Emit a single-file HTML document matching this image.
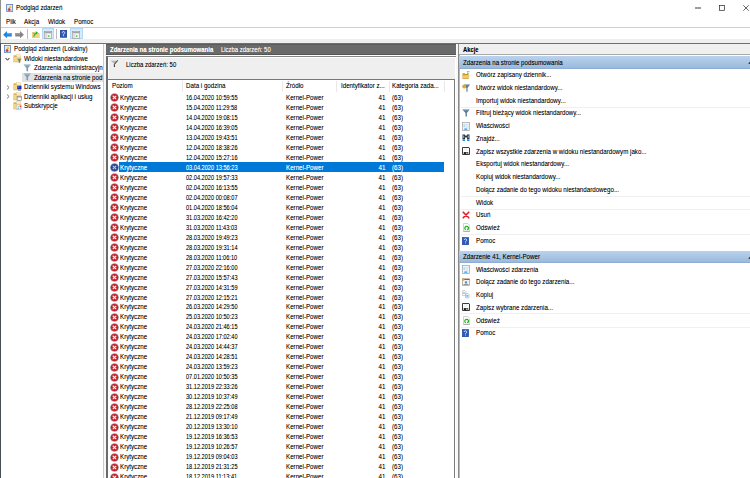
<!DOCTYPE html>
<html><head><meta charset="utf-8">
<style>
*{box-sizing:border-box;margin:0;padding:0}
html,body{width:750px;height:478px;overflow:hidden;background:#fff;font-family:"Liberation Sans",sans-serif;font-size:6.7px;color:#000;text-shadow:0 0 0.3px rgba(0,0,0,.3)}
.a{position:absolute;white-space:nowrap;transform-origin:0 50%;transform:scaleX(var(--k,.925))}
.a.i{transform:none}
#lb{position:absolute;left:0;top:0;width:1px;height:478px;background:linear-gradient(#8e938e 0,#8e938e 43px,#474e57 43px)}
/* title */
#title{left:15.7px;top:4px;line-height:8px}
.menu{top:17px;line-height:9px}
#mline{position:absolute;left:1px;top:26.6px;width:749px;height:1px;background:#cfcfcf}
#tbband{position:absolute;left:1px;top:39.2px;width:749px;height:3.6px;background:#efefef}
#tbline{position:absolute;left:1px;top:42.6px;width:749px;height:1px;background:#707070}
/* left tree */
#ldiv{position:absolute;left:103px;top:43.5px;width:3px;height:435px;background:#f8f8f8;border-left:1px solid #c6cad2}
.tr{line-height:9px}
.tsep{position:absolute;top:29.4px;width:1px;height:9.6px;background:#bdbdbd}
.tbtn{position:absolute;top:28.2px;width:12.4px;height:11.2px;background:#d8eafa;border:1px solid #b4d8f6}
#tree{position:absolute;left:0;top:43.5px;width:103px;height:80px;overflow:hidden}
.dt{--k:.84}
.rt{line-height:8px}
.wh{color:#fff;text-shadow:0 0 0.3px rgba(255,255,255,.5)}
#tsel{position:absolute;left:22px;top:72.5px;width:81px;height:9px;background:#e2e2e2}
/* center */
#chead{position:absolute;left:106px;top:43.5px;width:349.6px;height:11.1px;background:#6a6a6a;border-top:1px solid #5c5c5c;border-bottom:1px solid #555}
#chline{position:absolute;left:106px;top:54.6px;width:349.6px;height:1px;background:#fff}
#cbox{position:absolute;left:106px;top:55.8px;width:349.6px;height:23.5px;background:#efefef;border-left:2px solid #6b6b6b;border-top:1.5px solid #858585;box-shadow:inset 1px 1px 0 #fff,inset -1px 0 0 #fff}
#cleft{position:absolute;left:106px;top:56px;width:2px;height:422px;background:#6b6b6b}
#list{position:absolute;left:106px;top:78.9px;width:349px;height:400px;background:#fff;border-top:1px solid #777;border-right:1px solid #7a7a7a;border-left:2px solid #6b6b6b}
.hd{top:82px;line-height:8px;font-size:6.7px;color:#000;text-shadow:0 0 0.3px rgba(0,0,0,.3)}
.cs{position:absolute;top:81.2px;width:1px;height:10.8px;background:#e8e8e8}
.row{position:absolute;left:118.9px;width:324.8px;height:9.985px}
.row.sel{background:#0078d7}
/* right */
#rdiv{position:absolute;left:455.6px;top:43.5px;width:2.6px;height:435px;background:#f8f8f8}
#rpane{position:absolute;left:458px;top:43px;width:292px;height:435px;background:#fff;border-left:1px solid #8a8a8a;border-top:1px solid #6e6e6e;box-shadow:inset 1px 0 0 #b8b8b8}
#rhead{position:absolute;left:459px;top:44px;width:291px;height:10.8px;background:#f0f0f0;border-bottom:1px solid #aaaaaa}
.band{position:absolute;left:459px;width:291px;background:linear-gradient(#b9d3ee,#9cb9dc);border-bottom:1px solid #8eadd4}
.it{line-height:8px}
.sepr{position:absolute;left:461px;width:289px;height:1px;background:#f0f0f0}
</style></head><body>
<div id="lb"></div>
<!-- title bar -->
<div class="a" id="title">Podgląd zdarzeń</div>
<div class="a menu" style="left:6px">Plik</div>
<div class="a menu" style="left:24.3px">Akcja</div>
<div class="a menu" style="left:47.7px">Widok</div>
<div class="a menu" style="left:74px">Pomoc</div>
<div id="mline"></div>
<div id="tbband"></div>
<div id="tbline"></div>

<div id="ldiv"></div>
<div id="tree" style="top:0;height:120px">
<div id="tsel"></div>
<div class="a i" style="left:3.8px;top:45.1px;height:8px"><svg width="7" height="8" viewBox="0 0 14 16"><rect x="1" y="1" width="12" height="14" fill="#e8ecf0" stroke="#4a76b8" stroke-width="1.5"/><path d="M2.5 14.3H12.2V11H2.5z" fill="#c8d0dc"/><path d="M8 2.2L11 7.8H5z" fill="#f2c21c"/><circle cx="6" cy="11" r="2.7" fill="#d42028"/><circle cx="5.4" cy="10.3" r="0.9" fill="#f4a0a0"/></svg></div>
<div class="a i" style="left:4.6px;top:56px;height:5px"><svg width="5" height="5" viewBox="0 0 5 5"><path d="M0.6 1L2.5 3.2L4.4 1" fill="none" stroke="#222" stroke-width="1"/></svg></div>
<div class="a i" style="left:12.8px;top:53.8px;height:9px;line-height:0"><svg width="9" height="9" viewBox="0 0 18 18"><path d="M1 2.5H6.5L8 4H15.5V16H1z" fill="#dcb24e"/><rect x="7.5" y="1" width="8" height="5" fill="#fbf0c8" stroke="#d8c088" stroke-width="0.6"/><path d="M1 6H15.5V16H1z" fill="#f3d585"/><path d="M1 16H15.5" stroke="#c9a040" stroke-width="0.8"/><path d="M8 9.5H17.5L14 13.5V18L11.5 16.8V13.5z" fill="#58809e"/><path d="M9 10.2H16.5" stroke="#a8c0d0" stroke-width="0.8"/></svg></div>
<div class="a i" style="left:22.7px;top:63.8px;height:8px"><svg width="8.5" height="8" viewBox="0 0 14 14"><path d="M0.5 1h13l-5 6v6.5l-3-1.5V7z" fill="#7f9fb8"/><path d="M1.5 2h11" stroke="#bcd0de" stroke-width="1.2"/></svg></div>
<div class="a i" style="left:22.7px;top:73.2px;height:8px"><svg width="8.5" height="8" viewBox="0 0 14 14"><path d="M0.5 1h13l-5 6v6.5l-3-1.5V7z" fill="#7f9fb8"/><path d="M1.5 2h11" stroke="#bcd0de" stroke-width="1.2"/></svg></div>
<div class="a i" style="left:5.5px;top:84.6px;height:5px;line-height:0"><svg width="5" height="5" viewBox="0 0 5 5"><path d="M1 0.5L3.1 2.5L1 4.5" fill="none" stroke="#7a7a7a" stroke-width="1"/></svg></div>
<div class="a i" style="left:5.5px;top:93.8px;height:5px;line-height:0"><svg width="5" height="5" viewBox="0 0 5 5"><path d="M1 0.5L3.1 2.5L1 4.5" fill="none" stroke="#7a7a7a" stroke-width="1"/></svg></div>
<div class="a i" style="left:12.7px;top:82.2px;height:9px;line-height:0"><svg width="9" height="9" viewBox="0 0 18 18"><path d="M1 2.5H6.5L8 4H15.5V16H1z" fill="#dcb24e"/><rect x="7.5" y="1" width="8" height="5" fill="#fbf0c8" stroke="#d8c088" stroke-width="0.6"/><path d="M1 6H15.5V16H1z" fill="#f3d585"/><path d="M1 16H15.5" stroke="#c9a040" stroke-width="0.8"/><rect x="8.5" y="7.5" width="8.5" height="7" fill="#1a2cb4"/><rect x="9.5" y="8.5" width="3" height="3.5" fill="#fff" opacity=".25"/><rect x="10" y="14.5" width="6" height="3" fill="#8e96a8"/></svg></div>
<div class="a i" style="left:12.7px;top:91.7px;height:9px;line-height:0"><svg width="9" height="9" viewBox="0 0 18 18"><path d="M1 2.5H6.5L8 4H15.5V16H1z" fill="#dcb24e"/><rect x="7.5" y="1" width="8" height="5" fill="#fbf0c8" stroke="#d8c088" stroke-width="0.6"/><path d="M1 6H15.5V16H1z" fill="#f3d585"/><path d="M1 16H15.5" stroke="#c9a040" stroke-width="0.8"/><rect x="8.2" y="9" width="9.2" height="8.2" fill="#f8f8f8" stroke="#66687a" stroke-width="1.1"/><rect x="8.2" y="9" width="9.2" height="2" fill="#9a9cae"/></svg></div>
<div class="a i" style="left:12.7px;top:101.2px;height:9px;line-height:0"><svg width="9" height="9" viewBox="0 0 18 18"><path d="M1 2.5H6.5L8 4H15.5V16H1z" fill="#dcb24e"/><rect x="7.5" y="1" width="8" height="5" fill="#fbf0c8" stroke="#d8c088" stroke-width="0.6"/><path d="M1 6H15.5V16H1z" fill="#f3d585"/><path d="M1 16H15.5" stroke="#c9a040" stroke-width="0.8"/><rect x="7" y="8" width="10.5" height="9.5" fill="#fafafa" stroke="#a8aab8" stroke-width="0.8"/><path d="M8.5 16.5L11 12.5V16.5z" fill="#2a7ed6"/><rect x="9.5" y="11" width="2" height="1.5" fill="#2a7ed6"/><rect x="13.5" y="9" width="2.6" height="3.6" fill="#e83434"/><rect x="13.5" y="13.5" width="2.6" height="2.6" fill="#aac8e8"/></svg></div>
<div class="a tr" style="left:13.8px;top:44px">Podgląd zdarzeń (Lokalny)</div>
<div class="a tr" style="left:24.2px;top:53.5px">Widoki niestandardowe</div>
<div class="a tr" style="left:33.9px;top:63px">Zdarzenia administracyjn</div>
<div class="a tr" style="left:33.9px;top:72.5px">Zdarzenia na stronie pod</div>
<div class="a tr" style="left:24.2px;top:82px">Dzienniki systemu Windows</div>
<div class="a tr" style="left:24.2px;top:91.5px">Dzienniki aplikacji i usług</div>
<div class="a tr" style="left:24.2px;top:101px">Subskrypcje</div>
</div>
<!-- toolbar -->
<div class="a i" style="left:2.9px;top:30.8px;height:8px;line-height:0"><svg width="9" height="7.4" viewBox="0 0 15 12"><path d="M0.2 6L6.6 0V3.1H14.6V8.9H6.6V12z" fill="#1a84e0"/><path d="M6.6 3.1H14.6V5.5H6.6z" fill="#4fb0f6"/></svg></div>
<div class="a i" style="left:14.9px;top:30.8px;height:8px;line-height:0"><svg width="9" height="7.4" viewBox="0 0 15 12"><path d="M14.8 6L8.4 0V3.1H0.4V8.9H8.4V12z" fill="#858585"/><path d="M0.4 3.1H8.4V5.5H0.4z" fill="#a0a0a0"/></svg></div>
<div class="tsep" style="left:27.2px"></div>
<div class="a i" style="left:32px;top:30.8px;height:8px;line-height:0"><svg width="7.6" height="7.6" viewBox="0 0 14 14"><path d="M0.5 2.5h5l1.2 1.5H13.5V13.5H0.5z" fill="#d8ac44"/><path d="M0.5 5.5H13.5V13.5H0.5z" fill="#f2d47e"/><path d="M0.5 13.5H13.5" stroke="#c09030" stroke-width="0.8"/><path d="M3.2 10.5C3.8 7.5 5.5 4.8 8.2 3.5" fill="none" stroke="#1fae2a" stroke-width="2.1"/><path d="M6.5 0.6L11 2.6L7.6 6.4z" fill="#1fae2a"/></svg></div>
<div class="tbtn" style="left:42px"></div>
<div class="a i" style="left:44px;top:30.8px;height:8px"><svg width="8" height="8" viewBox="0 0 14 14"><rect x="0.5" y="1" width="13" height="12" fill="#f6f6f6" stroke="#8c8c8c" stroke-width="1"/><rect x="1" y="1.5" width="12" height="2.5" fill="#a4a4a4"/><rect x="2" y="5" width="4" height="7" fill="#dcdcdc"/><rect x="7.5" y="7.5" width="1.8" height="3" fill="#1fb51f"/></svg></div>
<div class="tsep" style="left:55.6px"></div>
<div class="a i" style="left:60px;top:30.2px;height:8px"><svg width="7" height="7.6" viewBox="0 0 13 14"><rect x="0.6" y="0.6" width="11.8" height="12.8" fill="#2c5ec2" stroke="#102f86" stroke-width="1.2"/><path d="M4.3 5a2.2 2.2 0 1 1 3.2 2c-0.7 0.4-1 0.7-1 1.6" fill="none" stroke="#fff" stroke-width="1.5"/><rect x="5.7" y="9.7" width="1.6" height="1.6" fill="#fff"/></svg></div>
<div class="tbtn" style="left:70.2px"></div>
<div class="a i" style="left:72.3px;top:30.8px;height:8px"><svg width="8" height="8" viewBox="0 0 14 14"><rect x="0.5" y="1" width="13" height="12" fill="#f6f6f6" stroke="#8c8c8c" stroke-width="1"/><rect x="1" y="1.5" width="12" height="2.5" fill="#a4a4a4"/><rect x="2" y="5" width="4" height="7" fill="#dcdcdc"/><rect x="7.5" y="7.5" width="1.8" height="3" fill="#1fb51f"/></svg></div>
<!-- title icon & controls -->
<div class="a i" style="left:5.7px;top:3.7px;height:8px"><svg width="7.3" height="8" viewBox="0 0 14 16"><rect x="1" y="1" width="12" height="14" fill="#e8ecf0" stroke="#4a76b8" stroke-width="1.5"/><path d="M2.5 14.3H12.2V11H2.5z" fill="#c8d0dc"/><path d="M8 2.2L11 7.8H5z" fill="#f2c21c"/><circle cx="6" cy="11" r="2.7" fill="#d42028"/><circle cx="5.4" cy="10.3" r="0.9" fill="#f4a0a0"/></svg></div>
<div class="a i" style="left:694.8px;top:4.5px;height:6px;line-height:0"><svg width="6" height="6" viewBox="0 0 6 6"><rect x="0" y="2.5" width="6" height="1" fill="#3a3a3a"/></svg></div>
<div class="a i" style="left:718.8px;top:4.5px;height:6px;line-height:0"><svg width="6" height="6" viewBox="0 0 6 6"><rect x="0.5" y="0.5" width="5" height="4.8" fill="none" stroke="#222" stroke-width="0.7"/></svg></div>
<div class="a i" style="left:742.5px;top:4.5px;height:6px;line-height:0"><svg width="6" height="6" viewBox="0 0 6 6"><path d="M0.3 0.3L5.7 5.7M5.7 0.3L0.3 5.7" stroke="#222" stroke-width="0.7"/></svg></div>
<div id="chead"></div>
<div class="a wh" style="left:109.6px;top:45.5px;line-height:8px;font-weight:bold;--k:.893">Zdarzenia na stronie podsumowania</div>
<div class="a wh" style="left:221.2px;top:45.5px;line-height:8px;--k:.885">Liczba zdarzeń: 50</div>
<div id="chline"></div>
<div id="cbox"></div>
<div id="cleft"></div>
<div class="a" style="left:125.9px;top:60.8px;line-height:8px;--k:.895">Liczba zdarzeń: 50</div>
<div class="a i" style="left:110px;top:60px;height:7px"><svg width="8.3" height="7" viewBox="0 0 14 13"><path d="M0.5 1.5h13L8 7.5z" fill="#b4b4b4"/><path d="M13.5 1L7.5 8v4.5" fill="none" stroke="#222" stroke-width="1.8" stroke-linecap="round"/></svg></div>
<div id="list"></div>
<div class="a hd" style="left:112px">Poziom</div>
<div class="a hd" style="left:185.8px">Data i godzina</div>
<div class="a hd" style="left:285.8px">Źródło</div>
<div class="a hd" style="left:341px">Identyfikator z...</div>
<div class="a hd" style="left:392px">Kategoria zada...</div>
<div class="cs" style="left:182.3px"></div>
<div class="cs" style="left:282.3px"></div>
<div class="cs" style="left:336.4px"></div>
<div class="cs" style="left:388.6px"></div>
<div class="cs" style="left:443.5px"></div>
<div class="a i" style="left:110.1px;top:93.30px;height:9px;line-height:0"><svg width="9" height="9" viewBox="0 0 18 18"><circle cx="9" cy="9" r="8.6" fill="#8c9aa2"/><circle cx="9" cy="9" r="7.2" fill="#d11a22"/><circle cx="6.5" cy="6" r="2.5" fill="#e8474d" opacity=".6"/><path d="M5.6 5.6L12.4 12.4M12.4 5.6L5.6 12.4" stroke="#fff" stroke-width="2.1"/></svg></div>
<div class="a rt" style="left:119.6px;top:93.80px">Krytyczne</div>
<div class="a rt dt" style="left:185.8px;top:93.80px">16.04.2020 10:59:55</div>
<div class="a rt" style="left:285.8px;top:93.80px">Kernel-Power</div>
<div class="a rt" style="left:370px;width:15.5px;text-align:right;transform-origin:100% 50%;top:93.80px">41</div>
<div class="a rt" style="left:392px;top:93.80px">(63)</div>
<div class="a i" style="left:110.1px;top:103.28px;height:9px;line-height:0"><svg width="9" height="9" viewBox="0 0 18 18"><circle cx="9" cy="9" r="8.6" fill="#8c9aa2"/><circle cx="9" cy="9" r="7.2" fill="#d11a22"/><circle cx="6.5" cy="6" r="2.5" fill="#e8474d" opacity=".6"/><path d="M5.6 5.6L12.4 12.4M12.4 5.6L5.6 12.4" stroke="#fff" stroke-width="2.1"/></svg></div>
<div class="a rt" style="left:119.6px;top:103.78px">Krytyczne</div>
<div class="a rt dt" style="left:185.8px;top:103.78px">15.04.2020 11:29:58</div>
<div class="a rt" style="left:285.8px;top:103.78px">Kernel-Power</div>
<div class="a rt" style="left:370px;width:15.5px;text-align:right;transform-origin:100% 50%;top:103.78px">41</div>
<div class="a rt" style="left:392px;top:103.78px">(63)</div>
<div class="a i" style="left:110.1px;top:113.27px;height:9px;line-height:0"><svg width="9" height="9" viewBox="0 0 18 18"><circle cx="9" cy="9" r="8.6" fill="#8c9aa2"/><circle cx="9" cy="9" r="7.2" fill="#d11a22"/><circle cx="6.5" cy="6" r="2.5" fill="#e8474d" opacity=".6"/><path d="M5.6 5.6L12.4 12.4M12.4 5.6L5.6 12.4" stroke="#fff" stroke-width="2.1"/></svg></div>
<div class="a rt" style="left:119.6px;top:113.77px">Krytyczne</div>
<div class="a rt dt" style="left:185.8px;top:113.77px">14.04.2020 19:08:15</div>
<div class="a rt" style="left:285.8px;top:113.77px">Kernel-Power</div>
<div class="a rt" style="left:370px;width:15.5px;text-align:right;transform-origin:100% 50%;top:113.77px">41</div>
<div class="a rt" style="left:392px;top:113.77px">(63)</div>
<div class="a i" style="left:110.1px;top:123.25px;height:9px;line-height:0"><svg width="9" height="9" viewBox="0 0 18 18"><circle cx="9" cy="9" r="8.6" fill="#8c9aa2"/><circle cx="9" cy="9" r="7.2" fill="#d11a22"/><circle cx="6.5" cy="6" r="2.5" fill="#e8474d" opacity=".6"/><path d="M5.6 5.6L12.4 12.4M12.4 5.6L5.6 12.4" stroke="#fff" stroke-width="2.1"/></svg></div>
<div class="a rt" style="left:119.6px;top:123.75px">Krytyczne</div>
<div class="a rt dt" style="left:185.8px;top:123.75px">14.04.2020 16:39:05</div>
<div class="a rt" style="left:285.8px;top:123.75px">Kernel-Power</div>
<div class="a rt" style="left:370px;width:15.5px;text-align:right;transform-origin:100% 50%;top:123.75px">41</div>
<div class="a rt" style="left:392px;top:123.75px">(63)</div>
<div class="a i" style="left:110.1px;top:133.24px;height:9px;line-height:0"><svg width="9" height="9" viewBox="0 0 18 18"><circle cx="9" cy="9" r="8.6" fill="#8c9aa2"/><circle cx="9" cy="9" r="7.2" fill="#d11a22"/><circle cx="6.5" cy="6" r="2.5" fill="#e8474d" opacity=".6"/><path d="M5.6 5.6L12.4 12.4M12.4 5.6L5.6 12.4" stroke="#fff" stroke-width="2.1"/></svg></div>
<div class="a rt" style="left:119.6px;top:133.74px">Krytyczne</div>
<div class="a rt dt" style="left:185.8px;top:133.74px">13.04.2020 19:43:51</div>
<div class="a rt" style="left:285.8px;top:133.74px">Kernel-Power</div>
<div class="a rt" style="left:370px;width:15.5px;text-align:right;transform-origin:100% 50%;top:133.74px">41</div>
<div class="a rt" style="left:392px;top:133.74px">(63)</div>
<div class="a i" style="left:110.1px;top:143.22px;height:9px;line-height:0"><svg width="9" height="9" viewBox="0 0 18 18"><circle cx="9" cy="9" r="8.6" fill="#8c9aa2"/><circle cx="9" cy="9" r="7.2" fill="#d11a22"/><circle cx="6.5" cy="6" r="2.5" fill="#e8474d" opacity=".6"/><path d="M5.6 5.6L12.4 12.4M12.4 5.6L5.6 12.4" stroke="#fff" stroke-width="2.1"/></svg></div>
<div class="a rt" style="left:119.6px;top:143.72px">Krytyczne</div>
<div class="a rt dt" style="left:185.8px;top:143.72px">12.04.2020 18:38:26</div>
<div class="a rt" style="left:285.8px;top:143.72px">Kernel-Power</div>
<div class="a rt" style="left:370px;width:15.5px;text-align:right;transform-origin:100% 50%;top:143.72px">41</div>
<div class="a rt" style="left:392px;top:143.72px">(63)</div>
<div class="a i" style="left:110.1px;top:153.21px;height:9px;line-height:0"><svg width="9" height="9" viewBox="0 0 18 18"><circle cx="9" cy="9" r="8.6" fill="#8c9aa2"/><circle cx="9" cy="9" r="7.2" fill="#d11a22"/><circle cx="6.5" cy="6" r="2.5" fill="#e8474d" opacity=".6"/><path d="M5.6 5.6L12.4 12.4M12.4 5.6L5.6 12.4" stroke="#fff" stroke-width="2.1"/></svg></div>
<div class="a rt" style="left:119.6px;top:153.71px">Krytyczne</div>
<div class="a rt dt" style="left:185.8px;top:153.71px">12.04.2020 15:27:16</div>
<div class="a rt" style="left:285.8px;top:153.71px">Kernel-Power</div>
<div class="a rt" style="left:370px;width:15.5px;text-align:right;transform-origin:100% 50%;top:153.71px">41</div>
<div class="a rt" style="left:392px;top:153.71px">(63)</div>
<div class="row sel" style="top:162.39px"></div>
<div class="a i" style="left:110.1px;top:163.19px;height:9px;line-height:0"><svg width="9" height="9" viewBox="0 0 18 18"><circle cx="9" cy="9" r="8.6" fill="#4a8cc8"/><circle cx="9" cy="9" r="7.2" fill="#3c3f86"/><path d="M5.6 5.6L12.4 12.4M12.4 5.6L5.6 12.4" stroke="#a8d4f4" stroke-width="2.1"/></svg></div>
<div class="a rt wh" style="left:119.6px;top:163.69px">Krytyczne</div>
<div class="a rt dt wh" style="left:185.8px;top:163.69px">03.04.2020 13:56:23</div>
<div class="a rt wh" style="left:285.8px;top:163.69px">Kernel-Power</div>
<div class="a rt wh" style="left:370px;width:15.5px;text-align:right;transform-origin:100% 50%;top:163.69px">41</div>
<div class="a rt wh" style="left:392px;top:163.69px">(63)</div>
<div class="a i" style="left:110.1px;top:173.18px;height:9px;line-height:0"><svg width="9" height="9" viewBox="0 0 18 18"><circle cx="9" cy="9" r="8.6" fill="#8c9aa2"/><circle cx="9" cy="9" r="7.2" fill="#d11a22"/><circle cx="6.5" cy="6" r="2.5" fill="#e8474d" opacity=".6"/><path d="M5.6 5.6L12.4 12.4M12.4 5.6L5.6 12.4" stroke="#fff" stroke-width="2.1"/></svg></div>
<div class="a rt" style="left:119.6px;top:173.68px">Krytyczne</div>
<div class="a rt dt" style="left:185.8px;top:173.68px">02.04.2020 19:57:33</div>
<div class="a rt" style="left:285.8px;top:173.68px">Kernel-Power</div>
<div class="a rt" style="left:370px;width:15.5px;text-align:right;transform-origin:100% 50%;top:173.68px">41</div>
<div class="a rt" style="left:392px;top:173.68px">(63)</div>
<div class="a i" style="left:110.1px;top:183.16px;height:9px;line-height:0"><svg width="9" height="9" viewBox="0 0 18 18"><circle cx="9" cy="9" r="8.6" fill="#8c9aa2"/><circle cx="9" cy="9" r="7.2" fill="#d11a22"/><circle cx="6.5" cy="6" r="2.5" fill="#e8474d" opacity=".6"/><path d="M5.6 5.6L12.4 12.4M12.4 5.6L5.6 12.4" stroke="#fff" stroke-width="2.1"/></svg></div>
<div class="a rt" style="left:119.6px;top:183.66px">Krytyczne</div>
<div class="a rt dt" style="left:185.8px;top:183.66px">02.04.2020 16:13:55</div>
<div class="a rt" style="left:285.8px;top:183.66px">Kernel-Power</div>
<div class="a rt" style="left:370px;width:15.5px;text-align:right;transform-origin:100% 50%;top:183.66px">41</div>
<div class="a rt" style="left:392px;top:183.66px">(63)</div>
<div class="a i" style="left:110.1px;top:193.15px;height:9px;line-height:0"><svg width="9" height="9" viewBox="0 0 18 18"><circle cx="9" cy="9" r="8.6" fill="#8c9aa2"/><circle cx="9" cy="9" r="7.2" fill="#d11a22"/><circle cx="6.5" cy="6" r="2.5" fill="#e8474d" opacity=".6"/><path d="M5.6 5.6L12.4 12.4M12.4 5.6L5.6 12.4" stroke="#fff" stroke-width="2.1"/></svg></div>
<div class="a rt" style="left:119.6px;top:193.65px">Krytyczne</div>
<div class="a rt dt" style="left:185.8px;top:193.65px">02.04.2020 00:08:07</div>
<div class="a rt" style="left:285.8px;top:193.65px">Kernel-Power</div>
<div class="a rt" style="left:370px;width:15.5px;text-align:right;transform-origin:100% 50%;top:193.65px">41</div>
<div class="a rt" style="left:392px;top:193.65px">(63)</div>
<div class="a i" style="left:110.1px;top:203.13px;height:9px;line-height:0"><svg width="9" height="9" viewBox="0 0 18 18"><circle cx="9" cy="9" r="8.6" fill="#8c9aa2"/><circle cx="9" cy="9" r="7.2" fill="#d11a22"/><circle cx="6.5" cy="6" r="2.5" fill="#e8474d" opacity=".6"/><path d="M5.6 5.6L12.4 12.4M12.4 5.6L5.6 12.4" stroke="#fff" stroke-width="2.1"/></svg></div>
<div class="a rt" style="left:119.6px;top:203.63px">Krytyczne</div>
<div class="a rt dt" style="left:185.8px;top:203.63px">01.04.2020 18:56:04</div>
<div class="a rt" style="left:285.8px;top:203.63px">Kernel-Power</div>
<div class="a rt" style="left:370px;width:15.5px;text-align:right;transform-origin:100% 50%;top:203.63px">41</div>
<div class="a rt" style="left:392px;top:203.63px">(63)</div>
<div class="a i" style="left:110.1px;top:213.12px;height:9px;line-height:0"><svg width="9" height="9" viewBox="0 0 18 18"><circle cx="9" cy="9" r="8.6" fill="#8c9aa2"/><circle cx="9" cy="9" r="7.2" fill="#d11a22"/><circle cx="6.5" cy="6" r="2.5" fill="#e8474d" opacity=".6"/><path d="M5.6 5.6L12.4 12.4M12.4 5.6L5.6 12.4" stroke="#fff" stroke-width="2.1"/></svg></div>
<div class="a rt" style="left:119.6px;top:213.62px">Krytyczne</div>
<div class="a rt dt" style="left:185.8px;top:213.62px">31.03.2020 16:42:20</div>
<div class="a rt" style="left:285.8px;top:213.62px">Kernel-Power</div>
<div class="a rt" style="left:370px;width:15.5px;text-align:right;transform-origin:100% 50%;top:213.62px">41</div>
<div class="a rt" style="left:392px;top:213.62px">(63)</div>
<div class="a i" style="left:110.1px;top:223.11px;height:9px;line-height:0"><svg width="9" height="9" viewBox="0 0 18 18"><circle cx="9" cy="9" r="8.6" fill="#8c9aa2"/><circle cx="9" cy="9" r="7.2" fill="#d11a22"/><circle cx="6.5" cy="6" r="2.5" fill="#e8474d" opacity=".6"/><path d="M5.6 5.6L12.4 12.4M12.4 5.6L5.6 12.4" stroke="#fff" stroke-width="2.1"/></svg></div>
<div class="a rt" style="left:119.6px;top:223.61px">Krytyczne</div>
<div class="a rt dt" style="left:185.8px;top:223.61px">31.03.2020 11:43:03</div>
<div class="a rt" style="left:285.8px;top:223.61px">Kernel-Power</div>
<div class="a rt" style="left:370px;width:15.5px;text-align:right;transform-origin:100% 50%;top:223.61px">41</div>
<div class="a rt" style="left:392px;top:223.61px">(63)</div>
<div class="a i" style="left:110.1px;top:233.09px;height:9px;line-height:0"><svg width="9" height="9" viewBox="0 0 18 18"><circle cx="9" cy="9" r="8.6" fill="#8c9aa2"/><circle cx="9" cy="9" r="7.2" fill="#d11a22"/><circle cx="6.5" cy="6" r="2.5" fill="#e8474d" opacity=".6"/><path d="M5.6 5.6L12.4 12.4M12.4 5.6L5.6 12.4" stroke="#fff" stroke-width="2.1"/></svg></div>
<div class="a rt" style="left:119.6px;top:233.59px">Krytyczne</div>
<div class="a rt dt" style="left:185.8px;top:233.59px">28.03.2020 19:49:23</div>
<div class="a rt" style="left:285.8px;top:233.59px">Kernel-Power</div>
<div class="a rt" style="left:370px;width:15.5px;text-align:right;transform-origin:100% 50%;top:233.59px">41</div>
<div class="a rt" style="left:392px;top:233.59px">(63)</div>
<div class="a i" style="left:110.1px;top:243.07px;height:9px;line-height:0"><svg width="9" height="9" viewBox="0 0 18 18"><circle cx="9" cy="9" r="8.6" fill="#8c9aa2"/><circle cx="9" cy="9" r="7.2" fill="#d11a22"/><circle cx="6.5" cy="6" r="2.5" fill="#e8474d" opacity=".6"/><path d="M5.6 5.6L12.4 12.4M12.4 5.6L5.6 12.4" stroke="#fff" stroke-width="2.1"/></svg></div>
<div class="a rt" style="left:119.6px;top:243.57px">Krytyczne</div>
<div class="a rt dt" style="left:185.8px;top:243.57px">28.03.2020 19:31:14</div>
<div class="a rt" style="left:285.8px;top:243.57px">Kernel-Power</div>
<div class="a rt" style="left:370px;width:15.5px;text-align:right;transform-origin:100% 50%;top:243.57px">41</div>
<div class="a rt" style="left:392px;top:243.57px">(63)</div>
<div class="a i" style="left:110.1px;top:253.06px;height:9px;line-height:0"><svg width="9" height="9" viewBox="0 0 18 18"><circle cx="9" cy="9" r="8.6" fill="#8c9aa2"/><circle cx="9" cy="9" r="7.2" fill="#d11a22"/><circle cx="6.5" cy="6" r="2.5" fill="#e8474d" opacity=".6"/><path d="M5.6 5.6L12.4 12.4M12.4 5.6L5.6 12.4" stroke="#fff" stroke-width="2.1"/></svg></div>
<div class="a rt" style="left:119.6px;top:253.56px">Krytyczne</div>
<div class="a rt dt" style="left:185.8px;top:253.56px">28.03.2020 11:06:10</div>
<div class="a rt" style="left:285.8px;top:253.56px">Kernel-Power</div>
<div class="a rt" style="left:370px;width:15.5px;text-align:right;transform-origin:100% 50%;top:253.56px">41</div>
<div class="a rt" style="left:392px;top:253.56px">(63)</div>
<div class="a i" style="left:110.1px;top:263.05px;height:9px;line-height:0"><svg width="9" height="9" viewBox="0 0 18 18"><circle cx="9" cy="9" r="8.6" fill="#8c9aa2"/><circle cx="9" cy="9" r="7.2" fill="#d11a22"/><circle cx="6.5" cy="6" r="2.5" fill="#e8474d" opacity=".6"/><path d="M5.6 5.6L12.4 12.4M12.4 5.6L5.6 12.4" stroke="#fff" stroke-width="2.1"/></svg></div>
<div class="a rt" style="left:119.6px;top:263.55px">Krytyczne</div>
<div class="a rt dt" style="left:185.8px;top:263.55px">27.03.2020 22:16:00</div>
<div class="a rt" style="left:285.8px;top:263.55px">Kernel-Power</div>
<div class="a rt" style="left:370px;width:15.5px;text-align:right;transform-origin:100% 50%;top:263.55px">41</div>
<div class="a rt" style="left:392px;top:263.55px">(63)</div>
<div class="a i" style="left:110.1px;top:273.03px;height:9px;line-height:0"><svg width="9" height="9" viewBox="0 0 18 18"><circle cx="9" cy="9" r="8.6" fill="#8c9aa2"/><circle cx="9" cy="9" r="7.2" fill="#d11a22"/><circle cx="6.5" cy="6" r="2.5" fill="#e8474d" opacity=".6"/><path d="M5.6 5.6L12.4 12.4M12.4 5.6L5.6 12.4" stroke="#fff" stroke-width="2.1"/></svg></div>
<div class="a rt" style="left:119.6px;top:273.53px">Krytyczne</div>
<div class="a rt dt" style="left:185.8px;top:273.53px">27.03.2020 15:57:43</div>
<div class="a rt" style="left:285.8px;top:273.53px">Kernel-Power</div>
<div class="a rt" style="left:370px;width:15.5px;text-align:right;transform-origin:100% 50%;top:273.53px">41</div>
<div class="a rt" style="left:392px;top:273.53px">(63)</div>
<div class="a i" style="left:110.1px;top:283.01px;height:9px;line-height:0"><svg width="9" height="9" viewBox="0 0 18 18"><circle cx="9" cy="9" r="8.6" fill="#8c9aa2"/><circle cx="9" cy="9" r="7.2" fill="#d11a22"/><circle cx="6.5" cy="6" r="2.5" fill="#e8474d" opacity=".6"/><path d="M5.6 5.6L12.4 12.4M12.4 5.6L5.6 12.4" stroke="#fff" stroke-width="2.1"/></svg></div>
<div class="a rt" style="left:119.6px;top:283.51px">Krytyczne</div>
<div class="a rt dt" style="left:185.8px;top:283.51px">27.03.2020 14:31:59</div>
<div class="a rt" style="left:285.8px;top:283.51px">Kernel-Power</div>
<div class="a rt" style="left:370px;width:15.5px;text-align:right;transform-origin:100% 50%;top:283.51px">41</div>
<div class="a rt" style="left:392px;top:283.51px">(63)</div>
<div class="a i" style="left:110.1px;top:293.00px;height:9px;line-height:0"><svg width="9" height="9" viewBox="0 0 18 18"><circle cx="9" cy="9" r="8.6" fill="#8c9aa2"/><circle cx="9" cy="9" r="7.2" fill="#d11a22"/><circle cx="6.5" cy="6" r="2.5" fill="#e8474d" opacity=".6"/><path d="M5.6 5.6L12.4 12.4M12.4 5.6L5.6 12.4" stroke="#fff" stroke-width="2.1"/></svg></div>
<div class="a rt" style="left:119.6px;top:293.50px">Krytyczne</div>
<div class="a rt dt" style="left:185.8px;top:293.50px">27.03.2020 12:15:21</div>
<div class="a rt" style="left:285.8px;top:293.50px">Kernel-Power</div>
<div class="a rt" style="left:370px;width:15.5px;text-align:right;transform-origin:100% 50%;top:293.50px">41</div>
<div class="a rt" style="left:392px;top:293.50px">(63)</div>
<div class="a i" style="left:110.1px;top:302.99px;height:9px;line-height:0"><svg width="9" height="9" viewBox="0 0 18 18"><circle cx="9" cy="9" r="8.6" fill="#8c9aa2"/><circle cx="9" cy="9" r="7.2" fill="#d11a22"/><circle cx="6.5" cy="6" r="2.5" fill="#e8474d" opacity=".6"/><path d="M5.6 5.6L12.4 12.4M12.4 5.6L5.6 12.4" stroke="#fff" stroke-width="2.1"/></svg></div>
<div class="a rt" style="left:119.6px;top:303.49px">Krytyczne</div>
<div class="a rt dt" style="left:185.8px;top:303.49px">26.03.2020 14:29:50</div>
<div class="a rt" style="left:285.8px;top:303.49px">Kernel-Power</div>
<div class="a rt" style="left:370px;width:15.5px;text-align:right;transform-origin:100% 50%;top:303.49px">41</div>
<div class="a rt" style="left:392px;top:303.49px">(63)</div>
<div class="a i" style="left:110.1px;top:312.97px;height:9px;line-height:0"><svg width="9" height="9" viewBox="0 0 18 18"><circle cx="9" cy="9" r="8.6" fill="#8c9aa2"/><circle cx="9" cy="9" r="7.2" fill="#d11a22"/><circle cx="6.5" cy="6" r="2.5" fill="#e8474d" opacity=".6"/><path d="M5.6 5.6L12.4 12.4M12.4 5.6L5.6 12.4" stroke="#fff" stroke-width="2.1"/></svg></div>
<div class="a rt" style="left:119.6px;top:313.47px">Krytyczne</div>
<div class="a rt dt" style="left:185.8px;top:313.47px">25.03.2020 10:50:23</div>
<div class="a rt" style="left:285.8px;top:313.47px">Kernel-Power</div>
<div class="a rt" style="left:370px;width:15.5px;text-align:right;transform-origin:100% 50%;top:313.47px">41</div>
<div class="a rt" style="left:392px;top:313.47px">(63)</div>
<div class="a i" style="left:110.1px;top:322.95px;height:9px;line-height:0"><svg width="9" height="9" viewBox="0 0 18 18"><circle cx="9" cy="9" r="8.6" fill="#8c9aa2"/><circle cx="9" cy="9" r="7.2" fill="#d11a22"/><circle cx="6.5" cy="6" r="2.5" fill="#e8474d" opacity=".6"/><path d="M5.6 5.6L12.4 12.4M12.4 5.6L5.6 12.4" stroke="#fff" stroke-width="2.1"/></svg></div>
<div class="a rt" style="left:119.6px;top:323.45px">Krytyczne</div>
<div class="a rt dt" style="left:185.8px;top:323.45px">24.03.2020 21:46:15</div>
<div class="a rt" style="left:285.8px;top:323.45px">Kernel-Power</div>
<div class="a rt" style="left:370px;width:15.5px;text-align:right;transform-origin:100% 50%;top:323.45px">41</div>
<div class="a rt" style="left:392px;top:323.45px">(63)</div>
<div class="a i" style="left:110.1px;top:332.94px;height:9px;line-height:0"><svg width="9" height="9" viewBox="0 0 18 18"><circle cx="9" cy="9" r="8.6" fill="#8c9aa2"/><circle cx="9" cy="9" r="7.2" fill="#d11a22"/><circle cx="6.5" cy="6" r="2.5" fill="#e8474d" opacity=".6"/><path d="M5.6 5.6L12.4 12.4M12.4 5.6L5.6 12.4" stroke="#fff" stroke-width="2.1"/></svg></div>
<div class="a rt" style="left:119.6px;top:333.44px">Krytyczne</div>
<div class="a rt dt" style="left:185.8px;top:333.44px">24.03.2020 17:02:40</div>
<div class="a rt" style="left:285.8px;top:333.44px">Kernel-Power</div>
<div class="a rt" style="left:370px;width:15.5px;text-align:right;transform-origin:100% 50%;top:333.44px">41</div>
<div class="a rt" style="left:392px;top:333.44px">(63)</div>
<div class="a i" style="left:110.1px;top:342.93px;height:9px;line-height:0"><svg width="9" height="9" viewBox="0 0 18 18"><circle cx="9" cy="9" r="8.6" fill="#8c9aa2"/><circle cx="9" cy="9" r="7.2" fill="#d11a22"/><circle cx="6.5" cy="6" r="2.5" fill="#e8474d" opacity=".6"/><path d="M5.6 5.6L12.4 12.4M12.4 5.6L5.6 12.4" stroke="#fff" stroke-width="2.1"/></svg></div>
<div class="a rt" style="left:119.6px;top:343.43px">Krytyczne</div>
<div class="a rt dt" style="left:185.8px;top:343.43px">24.03.2020 14:44:37</div>
<div class="a rt" style="left:285.8px;top:343.43px">Kernel-Power</div>
<div class="a rt" style="left:370px;width:15.5px;text-align:right;transform-origin:100% 50%;top:343.43px">41</div>
<div class="a rt" style="left:392px;top:343.43px">(63)</div>
<div class="a i" style="left:110.1px;top:352.91px;height:9px;line-height:0"><svg width="9" height="9" viewBox="0 0 18 18"><circle cx="9" cy="9" r="8.6" fill="#8c9aa2"/><circle cx="9" cy="9" r="7.2" fill="#d11a22"/><circle cx="6.5" cy="6" r="2.5" fill="#e8474d" opacity=".6"/><path d="M5.6 5.6L12.4 12.4M12.4 5.6L5.6 12.4" stroke="#fff" stroke-width="2.1"/></svg></div>
<div class="a rt" style="left:119.6px;top:353.41px">Krytyczne</div>
<div class="a rt dt" style="left:185.8px;top:353.41px">24.03.2020 14:28:51</div>
<div class="a rt" style="left:285.8px;top:353.41px">Kernel-Power</div>
<div class="a rt" style="left:370px;width:15.5px;text-align:right;transform-origin:100% 50%;top:353.41px">41</div>
<div class="a rt" style="left:392px;top:353.41px">(63)</div>
<div class="a i" style="left:110.1px;top:362.89px;height:9px;line-height:0"><svg width="9" height="9" viewBox="0 0 18 18"><circle cx="9" cy="9" r="8.6" fill="#8c9aa2"/><circle cx="9" cy="9" r="7.2" fill="#d11a22"/><circle cx="6.5" cy="6" r="2.5" fill="#e8474d" opacity=".6"/><path d="M5.6 5.6L12.4 12.4M12.4 5.6L5.6 12.4" stroke="#fff" stroke-width="2.1"/></svg></div>
<div class="a rt" style="left:119.6px;top:363.39px">Krytyczne</div>
<div class="a rt dt" style="left:185.8px;top:363.39px">24.03.2020 13:59:23</div>
<div class="a rt" style="left:285.8px;top:363.39px">Kernel-Power</div>
<div class="a rt" style="left:370px;width:15.5px;text-align:right;transform-origin:100% 50%;top:363.39px">41</div>
<div class="a rt" style="left:392px;top:363.39px">(63)</div>
<div class="a i" style="left:110.1px;top:372.88px;height:9px;line-height:0"><svg width="9" height="9" viewBox="0 0 18 18"><circle cx="9" cy="9" r="8.6" fill="#8c9aa2"/><circle cx="9" cy="9" r="7.2" fill="#d11a22"/><circle cx="6.5" cy="6" r="2.5" fill="#e8474d" opacity=".6"/><path d="M5.6 5.6L12.4 12.4M12.4 5.6L5.6 12.4" stroke="#fff" stroke-width="2.1"/></svg></div>
<div class="a rt" style="left:119.6px;top:373.38px">Krytyczne</div>
<div class="a rt dt" style="left:185.8px;top:373.38px">07.01.2020 10:50:35</div>
<div class="a rt" style="left:285.8px;top:373.38px">Kernel-Power</div>
<div class="a rt" style="left:370px;width:15.5px;text-align:right;transform-origin:100% 50%;top:373.38px">41</div>
<div class="a rt" style="left:392px;top:373.38px">(63)</div>
<div class="a i" style="left:110.1px;top:382.87px;height:9px;line-height:0"><svg width="9" height="9" viewBox="0 0 18 18"><circle cx="9" cy="9" r="8.6" fill="#8c9aa2"/><circle cx="9" cy="9" r="7.2" fill="#d11a22"/><circle cx="6.5" cy="6" r="2.5" fill="#e8474d" opacity=".6"/><path d="M5.6 5.6L12.4 12.4M12.4 5.6L5.6 12.4" stroke="#fff" stroke-width="2.1"/></svg></div>
<div class="a rt" style="left:119.6px;top:383.37px">Krytyczne</div>
<div class="a rt dt" style="left:185.8px;top:383.37px">31.12.2019 22:33:26</div>
<div class="a rt" style="left:285.8px;top:383.37px">Kernel-Power</div>
<div class="a rt" style="left:370px;width:15.5px;text-align:right;transform-origin:100% 50%;top:383.37px">41</div>
<div class="a rt" style="left:392px;top:383.37px">(63)</div>
<div class="a i" style="left:110.1px;top:392.85px;height:9px;line-height:0"><svg width="9" height="9" viewBox="0 0 18 18"><circle cx="9" cy="9" r="8.6" fill="#8c9aa2"/><circle cx="9" cy="9" r="7.2" fill="#d11a22"/><circle cx="6.5" cy="6" r="2.5" fill="#e8474d" opacity=".6"/><path d="M5.6 5.6L12.4 12.4M12.4 5.6L5.6 12.4" stroke="#fff" stroke-width="2.1"/></svg></div>
<div class="a rt" style="left:119.6px;top:393.35px">Krytyczne</div>
<div class="a rt dt" style="left:185.8px;top:393.35px">30.12.2019 10:37:49</div>
<div class="a rt" style="left:285.8px;top:393.35px">Kernel-Power</div>
<div class="a rt" style="left:370px;width:15.5px;text-align:right;transform-origin:100% 50%;top:393.35px">41</div>
<div class="a rt" style="left:392px;top:393.35px">(63)</div>
<div class="a i" style="left:110.1px;top:402.83px;height:9px;line-height:0"><svg width="9" height="9" viewBox="0 0 18 18"><circle cx="9" cy="9" r="8.6" fill="#8c9aa2"/><circle cx="9" cy="9" r="7.2" fill="#d11a22"/><circle cx="6.5" cy="6" r="2.5" fill="#e8474d" opacity=".6"/><path d="M5.6 5.6L12.4 12.4M12.4 5.6L5.6 12.4" stroke="#fff" stroke-width="2.1"/></svg></div>
<div class="a rt" style="left:119.6px;top:403.33px">Krytyczne</div>
<div class="a rt dt" style="left:185.8px;top:403.33px">28.12.2019 22:25:08</div>
<div class="a rt" style="left:285.8px;top:403.33px">Kernel-Power</div>
<div class="a rt" style="left:370px;width:15.5px;text-align:right;transform-origin:100% 50%;top:403.33px">41</div>
<div class="a rt" style="left:392px;top:403.33px">(63)</div>
<div class="a i" style="left:110.1px;top:412.82px;height:9px;line-height:0"><svg width="9" height="9" viewBox="0 0 18 18"><circle cx="9" cy="9" r="8.6" fill="#8c9aa2"/><circle cx="9" cy="9" r="7.2" fill="#d11a22"/><circle cx="6.5" cy="6" r="2.5" fill="#e8474d" opacity=".6"/><path d="M5.6 5.6L12.4 12.4M12.4 5.6L5.6 12.4" stroke="#fff" stroke-width="2.1"/></svg></div>
<div class="a rt" style="left:119.6px;top:413.32px">Krytyczne</div>
<div class="a rt dt" style="left:185.8px;top:413.32px">21.12.2019 09:17:49</div>
<div class="a rt" style="left:285.8px;top:413.32px">Kernel-Power</div>
<div class="a rt" style="left:370px;width:15.5px;text-align:right;transform-origin:100% 50%;top:413.32px">41</div>
<div class="a rt" style="left:392px;top:413.32px">(63)</div>
<div class="a i" style="left:110.1px;top:422.81px;height:9px;line-height:0"><svg width="9" height="9" viewBox="0 0 18 18"><circle cx="9" cy="9" r="8.6" fill="#8c9aa2"/><circle cx="9" cy="9" r="7.2" fill="#d11a22"/><circle cx="6.5" cy="6" r="2.5" fill="#e8474d" opacity=".6"/><path d="M5.6 5.6L12.4 12.4M12.4 5.6L5.6 12.4" stroke="#fff" stroke-width="2.1"/></svg></div>
<div class="a rt" style="left:119.6px;top:423.31px">Krytyczne</div>
<div class="a rt dt" style="left:185.8px;top:423.31px">20.12.2019 13:30:10</div>
<div class="a rt" style="left:285.8px;top:423.31px">Kernel-Power</div>
<div class="a rt" style="left:370px;width:15.5px;text-align:right;transform-origin:100% 50%;top:423.31px">41</div>
<div class="a rt" style="left:392px;top:423.31px">(63)</div>
<div class="a i" style="left:110.1px;top:432.79px;height:9px;line-height:0"><svg width="9" height="9" viewBox="0 0 18 18"><circle cx="9" cy="9" r="8.6" fill="#8c9aa2"/><circle cx="9" cy="9" r="7.2" fill="#d11a22"/><circle cx="6.5" cy="6" r="2.5" fill="#e8474d" opacity=".6"/><path d="M5.6 5.6L12.4 12.4M12.4 5.6L5.6 12.4" stroke="#fff" stroke-width="2.1"/></svg></div>
<div class="a rt" style="left:119.6px;top:433.29px">Krytyczne</div>
<div class="a rt dt" style="left:185.8px;top:433.29px">19.12.2019 16:36:53</div>
<div class="a rt" style="left:285.8px;top:433.29px">Kernel-Power</div>
<div class="a rt" style="left:370px;width:15.5px;text-align:right;transform-origin:100% 50%;top:433.29px">41</div>
<div class="a rt" style="left:392px;top:433.29px">(63)</div>
<div class="a i" style="left:110.1px;top:442.77px;height:9px;line-height:0"><svg width="9" height="9" viewBox="0 0 18 18"><circle cx="9" cy="9" r="8.6" fill="#8c9aa2"/><circle cx="9" cy="9" r="7.2" fill="#d11a22"/><circle cx="6.5" cy="6" r="2.5" fill="#e8474d" opacity=".6"/><path d="M5.6 5.6L12.4 12.4M12.4 5.6L5.6 12.4" stroke="#fff" stroke-width="2.1"/></svg></div>
<div class="a rt" style="left:119.6px;top:443.27px">Krytyczne</div>
<div class="a rt dt" style="left:185.8px;top:443.27px">19.12.2019 10:26:57</div>
<div class="a rt" style="left:285.8px;top:443.27px">Kernel-Power</div>
<div class="a rt" style="left:370px;width:15.5px;text-align:right;transform-origin:100% 50%;top:443.27px">41</div>
<div class="a rt" style="left:392px;top:443.27px">(63)</div>
<div class="a i" style="left:110.1px;top:452.76px;height:9px;line-height:0"><svg width="9" height="9" viewBox="0 0 18 18"><circle cx="9" cy="9" r="8.6" fill="#8c9aa2"/><circle cx="9" cy="9" r="7.2" fill="#d11a22"/><circle cx="6.5" cy="6" r="2.5" fill="#e8474d" opacity=".6"/><path d="M5.6 5.6L12.4 12.4M12.4 5.6L5.6 12.4" stroke="#fff" stroke-width="2.1"/></svg></div>
<div class="a rt" style="left:119.6px;top:453.26px">Krytyczne</div>
<div class="a rt dt" style="left:185.8px;top:453.26px">19.12.2019 09:04:03</div>
<div class="a rt" style="left:285.8px;top:453.26px">Kernel-Power</div>
<div class="a rt" style="left:370px;width:15.5px;text-align:right;transform-origin:100% 50%;top:453.26px">41</div>
<div class="a rt" style="left:392px;top:453.26px">(63)</div>
<div class="a i" style="left:110.1px;top:462.75px;height:9px;line-height:0"><svg width="9" height="9" viewBox="0 0 18 18"><circle cx="9" cy="9" r="8.6" fill="#8c9aa2"/><circle cx="9" cy="9" r="7.2" fill="#d11a22"/><circle cx="6.5" cy="6" r="2.5" fill="#e8474d" opacity=".6"/><path d="M5.6 5.6L12.4 12.4M12.4 5.6L5.6 12.4" stroke="#fff" stroke-width="2.1"/></svg></div>
<div class="a rt" style="left:119.6px;top:463.25px">Krytyczne</div>
<div class="a rt dt" style="left:185.8px;top:463.25px">18.12.2019 21:31:25</div>
<div class="a rt" style="left:285.8px;top:463.25px">Kernel-Power</div>
<div class="a rt" style="left:370px;width:15.5px;text-align:right;transform-origin:100% 50%;top:463.25px">41</div>
<div class="a rt" style="left:392px;top:463.25px">(63)</div>
<div class="a i" style="left:110.1px;top:472.73px;height:9px;line-height:0"><svg width="9" height="9" viewBox="0 0 18 18"><circle cx="9" cy="9" r="8.6" fill="#8c9aa2"/><circle cx="9" cy="9" r="7.2" fill="#d11a22"/><circle cx="6.5" cy="6" r="2.5" fill="#e8474d" opacity=".6"/><path d="M5.6 5.6L12.4 12.4M12.4 5.6L5.6 12.4" stroke="#fff" stroke-width="2.1"/></svg></div>
<div class="a rt" style="left:119.6px;top:473.23px">Krytyczne</div>
<div class="a rt dt" style="left:185.8px;top:473.23px">18.12.2019 11:13:41</div>
<div class="a rt" style="left:285.8px;top:473.23px">Kernel-Power</div>
<div class="a rt" style="left:370px;width:15.5px;text-align:right;transform-origin:100% 50%;top:473.23px">41</div>
<div class="a rt" style="left:392px;top:473.23px">(63)</div>

<div id="rdiv"></div>
<div id="rpane"></div>
<div id="rhead"></div>
<div class="a" style="left:462.7px;top:45.6px;line-height:8px;font-weight:bold;--k:.87">Akcje</div>
<div class="band" style="top:55.5px;height:13px"></div>
<div class="a" style="left:462.7px;top:58.6px;line-height:8px">Zdarzenia na stronie podsumowania</div>
<div class="band" style="top:250.7px;height:12px"></div>
<div class="a" style="left:462.7px;top:252.5px;line-height:8px">Zdarzenie 41, Kernel-Power</div>
<div class="a i" style="left:747.6px;top:61px;height:4px;line-height:0"><svg width="4" height="4" viewBox="0 0 4 4"><path d="M0.2 2.6L2.6 0.4L4 1.6V3z" fill="#000"/></svg></div>
<div class="a i" style="left:747.6px;top:255.6px;height:4px;line-height:0"><svg width="4" height="4" viewBox="0 0 4 4"><path d="M0.2 2.6L2.6 0.4L4 1.6V3z" fill="#000"/></svg></div>
<div class="a i" style="left:461.6px;top:71.40px;height:9px;line-height:0"><svg width="8" height="8" viewBox="0 0 16 16"><path d="M1 4.5h4.5l1.5 1.5H13v9H1z" fill="#c8992c"/><path d="M2.5 8.5H15.5L13.5 14.8H1z" fill="#f0cd68"/><path d="M1 15h12.5" stroke="#a87a1c" stroke-width="0.8"/><circle cx="11.5" cy="5" r="1.8" fill="#6aaae6"/><rect x="9.5" y="0.5" width="5.5" height="1.8" fill="#4fd64f"/></svg></div>
<div class="a it" style="left:476px;top:71.00px">Otwórz zapisany dziennik...</div>
<div class="a i" style="left:462.4px;top:83.55px;height:9px;line-height:0"><svg width="8" height="8" viewBox="0 0 16 16"><path d="M4 1H16L11 8V15.5H8.8V8z" fill="#54789a"/><path d="M6 2H14" stroke="#8fb0c8" stroke-width="1"/><circle cx="4.3" cy="5" r="3.9" fill="#f6a017"/></svg></div>
<div class="a it" style="left:476px;top:83.75px">Utwórz widok niestandardowy...</div>
<div class="a it" style="left:476px;top:96.50px">Importuj widok niestandardowy...</div>
<div class="a i" style="left:462.2px;top:109.25px;height:9px;line-height:0"><svg width="8" height="8" viewBox="0 0 16 16"><path d="M0.5 1H15.5L9.8 7.8V15H7V7.8z" fill="#5a7d9b"/><path d="M2 2.2H14" stroke="#9db8cc" stroke-width="1"/></svg></div>
<div class="a it" style="left:476px;top:109.25px">Filtruj bieżący widok niestandardowy...</div>
<div class="a i" style="left:462.1px;top:121.80px;height:9px;line-height:0"><svg width="8" height="9" viewBox="0 0 16 18"><rect x="0.8" y="0.8" width="14.4" height="16.4" fill="#f2f5f8" stroke="#9aa2ab" stroke-width="1.4"/><rect x="2.5" y="4" width="11" height="1.2" fill="#c8d4e0"/><rect x="3" y="6.5" width="3" height="3" fill="#8fd0f4"/><rect x="7.5" y="6.5" width="5" height="6" fill="#dfe6ee"/><rect x="4.5" y="13" width="6" height="2.5" fill="#1ea0ea"/></svg></div>
<div class="a it" style="left:476px;top:122.00px">Właściwości</div>
<div class="a i" style="left:462.4px;top:133.45px;height:9px;line-height:0"><svg width="8" height="8" viewBox="0 0 16 16"><path d="M1 3h5v9H1zM10 3h5v9h-5z" fill="#2e3640"/><rect x="5.5" y="5" width="5" height="4" fill="#2e3640"/><rect x="2.3" y="5" width="2" height="5" fill="#a8b4c0"/><rect x="11.5" y="5" width="2" height="5" fill="#a8b4c0"/><rect x="1" y="12.5" width="5" height="3.5" fill="#1a8ef0"/><rect x="10" y="12.5" width="5" height="3.5" fill="#1a8ef0"/></svg></div>
<div class="a it" style="left:476px;top:134.75px">Znajdź...</div>
<div class="a i" style="left:462px;top:146.50px;height:9px;line-height:0"><svg width="8" height="8" viewBox="0 0 16 16"><path d="M1 1H14L15 2V15H1z" fill="#fff" stroke="#262626" stroke-width="1.8"/><rect x="4" y="2" width="8" height="6" fill="#f4f4f4"/><rect x="3.5" y="10" width="9" height="5" fill="#2a2a2a"/><rect x="8.5" y="11" width="2.5" height="3" fill="#e8e8e8"/></svg></div>
<div class="a it" style="left:476px;top:147.50px">Zapisz wszystkie zdarzenia w widoku niestandardowym jako...</div>
<div class="a it" style="left:476px;top:160.25px">Eksportuj widok niestandardowy...</div>
<div class="a it" style="left:476px;top:173.00px">Kopiuj widok niestandardowy...</div>
<div class="a it" style="left:476px;top:185.75px">Dołącz zadanie do tego widoku niestandardowego...</div>
<div class="a it" style="left:476px;top:198.50px">Widok</div>
<div class="a i" style="left:462px;top:211.05px;height:9px;line-height:0"><svg width="8" height="8" viewBox="0 0 16 16"><path d="M2.5 2.5L13.5 13.5M13.5 2.5L2.5 13.5" stroke="#e3222a" stroke-width="3.4" stroke-linecap="round"/></svg></div>
<div class="a it" style="left:476px;top:211.25px">Usuń</div>
<div class="a i" style="left:462.9px;top:223.20px;height:9px;line-height:0"><svg width="7" height="9" viewBox="0 0 14 18"><path d="M1 1H9.5L13.4 5V17.2H1z" fill="#fbfbfb" stroke="#b0b0b0" stroke-width="1.1"/><path d="M1 16.6H13.4" stroke="#777" stroke-width="1"/><circle cx="7.3" cy="10.4" r="3.7" fill="none" stroke="#1db41d" stroke-width="2.4" stroke-dasharray="16.5 6.8" transform="rotate(120 7.3 10.4)"/><path d="M7.5 12.2L10.8 11.2L9.6 14.8z" fill="#1db41d"/></svg></div>
<div class="a it" style="left:476px;top:224.00px">Odśwież</div>
<div class="a i" style="left:462.4px;top:236.55px;height:9px;line-height:0"><svg width="7" height="8.3" viewBox="0 0 15 17"><rect x="0.8" y="0.8" width="13.4" height="15.4" fill="#2a5cc0" stroke="#15348a" stroke-width="1.2"/><path d="M5 6a2.5 2.5 0 1 1 3.5 2.3c-0.8 0.4-1 0.8-1 1.8" fill="none" stroke="#fff" stroke-width="1.7"/><rect x="6.6" y="11.5" width="1.8" height="1.8" fill="#fff"/></svg></div>
<div class="a it" style="left:476px;top:236.75px">Pomoc</div>
<div class="a i" style="left:462.1px;top:264.90px;height:9px;line-height:0"><svg width="8" height="9" viewBox="0 0 16 18"><rect x="0.8" y="0.8" width="14.4" height="16.4" fill="#f2f5f8" stroke="#9aa2ab" stroke-width="1.4"/><rect x="2.5" y="4" width="11" height="1.2" fill="#c8d4e0"/><rect x="3" y="6.5" width="3" height="3" fill="#8fd0f4"/><rect x="7.5" y="6.5" width="5" height="6" fill="#dfe6ee"/><rect x="4.5" y="13" width="6" height="2.5" fill="#1ea0ea"/></svg></div>
<div class="a it" style="left:476px;top:265.80px">Właściwości zdarzenia</div>
<div class="a i" style="left:462.4px;top:278.20px;height:9px;line-height:0"><svg width="8" height="8.5" viewBox="0 0 16 17"><rect x="1" y="2" width="14" height="13" fill="#f2f2f2" stroke="#8a8a8a" stroke-width="1.2"/><rect x="1" y="1.5" width="14" height="2.5" fill="#9c5a2a"/><circle cx="2.5" cy="3" r="2.4" fill="#f6a017"/><rect x="4" y="6" width="8" height="6" fill="#e6eef4"/><circle cx="8" cy="9" r="2.3" fill="#5a8ab0"/><rect x="3" y="12.5" width="10" height="1.5" fill="#777"/></svg></div>
<div class="a it" style="left:476px;top:278.40px">Dołącz zadanie do tego zdarzenia...</div>
<div class="a i" style="left:462.2px;top:290.00px;height:9px;line-height:0"><svg width="8" height="9" viewBox="0 0 16 18"><path d="M1 1h5l2 2v8H1z" fill="#f4f6f8" stroke="#a8b0b8" stroke-width="1"/><rect x="2.5" y="4" width="3" height="4" fill="#9cc8ee"/><path d="M7 7h5l2 2v7H7z" fill="#eef3f8" stroke="#8ea4b8" stroke-width="1"/><rect x="8.5" y="10" width="4" height="3.5" fill="#7fb6e6"/></svg></div>
<div class="a it" style="left:476px;top:291.20px">Kopiuj</div>
<div class="a i" style="left:462px;top:302.90px;height:9px;line-height:0"><svg width="8" height="8" viewBox="0 0 16 16"><path d="M1 1H14L15 2V15H1z" fill="#fff" stroke="#262626" stroke-width="1.8"/><rect x="4" y="2" width="8" height="6" fill="#f4f4f4"/><rect x="3.5" y="10" width="9" height="5" fill="#2a2a2a"/><rect x="8.5" y="11" width="2.5" height="3" fill="#e8e8e8"/></svg></div>
<div class="a it" style="left:476px;top:303.90px">Zapisz wybrane zdarzenia...</div>
<div class="a i" style="left:462.9px;top:315.80px;height:9px;line-height:0"><svg width="7" height="9" viewBox="0 0 14 18"><path d="M1 1H9.5L13.4 5V17.2H1z" fill="#fbfbfb" stroke="#b0b0b0" stroke-width="1.1"/><path d="M1 16.6H13.4" stroke="#777" stroke-width="1"/><circle cx="7.3" cy="10.4" r="3.7" fill="none" stroke="#1db41d" stroke-width="2.4" stroke-dasharray="16.5 6.8" transform="rotate(120 7.3 10.4)"/><path d="M7.5 12.2L10.8 11.2L9.6 14.8z" fill="#1db41d"/></svg></div>
<div class="a it" style="left:476px;top:316.60px">Odśwież</div>
<div class="a i" style="left:462.4px;top:329.20px;height:9px;line-height:0"><svg width="7" height="8.3" viewBox="0 0 15 17"><rect x="0.8" y="0.8" width="13.4" height="15.4" fill="#2a5cc0" stroke="#15348a" stroke-width="1.2"/><path d="M5 6a2.5 2.5 0 1 1 3.5 2.3c-0.8 0.4-1 0.8-1 1.8" fill="none" stroke="#fff" stroke-width="1.7"/><rect x="6.6" y="11.5" width="1.8" height="1.8" fill="#fff"/></svg></div>
<div class="a it" style="left:476px;top:329.40px">Pomoc</div>
<div class="sepr" style="top:106.7px"></div>
<div class="sepr" style="top:195.6px"></div>
<div class="sepr" style="top:208.6px"></div>
<div class="sepr" style="top:234.2px"></div>
<div class="sepr" style="top:313.2px"></div>
<div class="sepr" style="top:326.6px"></div>
</body></html>
